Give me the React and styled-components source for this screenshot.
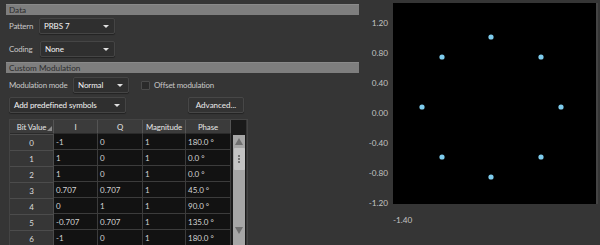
import React from 'react';
import styled, { createGlobalStyle } from 'styled-components';

// Estilos globales de la página
const GlobalStyle = createGlobalStyle`
  body {
    margin: 0;
    background: #353535;
    font-family: Lato, "Noto Sans", sans-serif;
  }
`;

const Page = styled.div`
  width: 600px;
  height: 245px;
  overflow: hidden;
  display: flex;
  background: #353535;
`;

const LeftPane = styled.div`
  width: 353px;
  margin-left: 6px;
  padding-top: 4px;
  display: flex;
  flex-direction: column;
`;

const SectionHeader = styled.div`
  height: 10px;
  line-height: 10px;
  background: #7e7e7e;
  border-top: 1px solid #8a8a8a;
  color: #2c2c2c;
  font-size: 8.2px;
  padding-left: 3px;
  margin-top: ${(p) => p.top || 0}px;
`;

const FormRow = styled.div`
  display: flex;
  align-items: center;
  margin-top: ${(p) => p.top || 0}px;
  padding-left: 3px;
`;

const Label = styled.span`
  flex-shrink: 0;
  white-space: nowrap;
  width: ${(p) => (p.w ? p.w + 'px' : 'auto')};
  margin-left: ${(p) => p.ml || 0}px;
  color: #c8c8c8;
  font-size: 7.9px;
  letter-spacing: -0.2px;
`;

const Select = styled.div`
  flex-shrink: 0;
  white-space: nowrap;
  width: ${(p) => p.w}px;
  height: 16px;
  box-sizing: border-box;
  display: flex;
  align-items: center;
  justify-content: space-between;
  padding: 0 5px 0 4px;
  background: #2f2f2f;
  border: 1px solid #454545;
  border-radius: 2px;
  color: #f4f4f4;
  font-size: 8px;
  letter-spacing: -0.1px;
  box-shadow: 0 1px 1px rgba(0, 0, 0, 0.35);
`;

const Caret = styled.span`
  width: 0;
  height: 0;
  border-left: 3px solid transparent;
  border-right: 3px solid transparent;
  border-top: 3px solid #e0e0e0;
`;

const CheckBox = styled.span`
  flex-shrink: 0;
  width: 7px;
  height: 7px;
  margin-left: 12px;
  border: 1px solid #4a4a4a;
  background: #2a2a2a;
  border-radius: 1px;
`;

const Button = styled.div`
  margin-left: 62px;
  width: 56px;
  height: 16px;
  box-sizing: border-box;
  display: flex;
  align-items: center;
  justify-content: center;
  background: #333;
  border: 1px solid #474747;
  border-radius: 2px;
  color: #ececec;
  font-size: 8px;
  box-shadow: 0 1px 1px rgba(0, 0, 0, 0.35);
`;

const TableFrame = styled.div`
  margin: 6px 0 0 3px;
  width: 237px;
  display: flex;
  border: 1px solid #444;
  border-bottom: none;
`;

const Grid = styled.div`
  display: grid;
  grid-template-columns: 44px 44px 45px 43px 45px;
  grid-auto-rows: 16px;
  grid-template-rows: 14px;
`;

const HeadCell = styled.div`
  position: relative;
  display: flex;
  align-items: center;
  justify-content: center;
  background: #3b3b3b;
  border-right: 1px solid #545454;
  border-bottom: 1px solid #2a2a2a;
  color: #e6e6e6;
  font-size: 7.8px;
  letter-spacing: -0.1px;
`;

const SortMark = styled.span`
  position: absolute;
  right: 1px;
  bottom: 2px;
  width: 0;
  height: 0;
  border-left: 5px solid transparent;
  border-bottom: 5px solid #8a8a8a;
`;

const RowHead = styled.div`
  display: flex;
  align-items: center;
  justify-content: center;
  background: #363636;
  border-top: 1px solid #4c4c4c;
  border-right: 1px solid #4c4c4c;
  color: #dcdcdc;
  font-size: 8px;
`;

const Cell = styled.div`
  display: flex;
  align-items: center;
  padding-left: 2px;
  background: #121212;
  border-right: 1px solid #3c3c3c;
  border-bottom: 1px solid #3c3c3c;
  color: #d4d4d4;
  font-size: 8px;
`;

const ScrollCol = styled.div`
  width: 15px;
  display: flex;
  flex-direction: column;
  background: #1a1a1a;
`;

const ScrollTrack = styled.div`
  margin: 1px 1px 0 2px;
  flex: 1;
  background: #a6a6a6;
  display: flex;
  flex-direction: column;
  align-items: center;
  padding-top: 3px;
`;

const Arrow = styled.span`
  width: 0;
  height: 0;
  border-left: 4px solid transparent;
  border-right: 4px solid transparent;
  ${(p) => (p.down ? 'border-top' : 'border-bottom')}: 7px solid #6f6f6f;
  margin-top: ${(p) => p.mt || 0}px;
`;

const Thumb = styled.div`
  margin-top: 3px;
  width: 11px;
  height: 22px;
  background: #c4c4c4;
  border-radius: 1px;
  display: flex;
  flex-direction: column;
  align-items: center;
  justify-content: center;
  gap: 1px;
`;

const Dot = styled.span`
  width: 2px;
  height: 2px;
  border-radius: 50%;
  background: #5a5a5a;
`;

const RightPane = styled.div`
  display: flex;
  margin-left: 2px;
  padding-top: 3px;
`;

const AxisY = styled.div`
  width: 27px;
  padding-top: 11px;
  display: flex;
  flex-direction: column;
  align-items: flex-end;
`;

const Tick = styled.div`
  height: 30px;
  line-height: 30px;
  margin-top: -6px;
  margin-bottom: 6px;
  color: #c4c4c4;
  font-size: 8.2px;
`;

const PlotColumn = styled.div`
  margin-left: 5px;
  display: flex;
  flex-direction: column;
`;

const Plot = styled.svg`
  display: block;
  background: #000;
  border-right: 2px solid #444;
`;

const XLabel = styled.div`
  margin-top: 11px;
  color: #c4c4c4;
  font-size: 8.2px;
`;

const rows = [
  ['0', '-1', '0', '1', '180.0 °'],
  ['1', '1', '0', '1', '0.0 °'],
  ['2', '1', '0', '1', '0.0 °'],
  ['3', '0.707', '0.707', '1', '45.0 °'],
  ['4', '0', '1', '1', '90.0 °'],
  ['5', '-0.707', '0.707', '1', '135.0 °'],
  ['6', '-1', '0', '1', '180.0 °'],
];

const points = [
  [97, 34], [48, 54], [147, 54], [28, 104],
  [167, 104], [48, 154], [147, 154], [97, 174],
];

const ticks = ['1.20', '0.80', '0.40', '0.00', '-0.40', '-0.80', '-1.20'];

const App = () => {
  return (
    <Page>
      <GlobalStyle />
      <LeftPane>
        <SectionHeader>Data</SectionHeader>
        <FormRow top={3}>
          <Label w={30}>Pattern</Label>
          <Select w={76}>PRBS 7<Caret /></Select>
        </FormRow>
        <FormRow top={7}>
          <Label w={31}>Coding</Label>
          <Select w={75}>None<Caret /></Select>
        </FormRow>
        <SectionHeader top={5}>Custom Modulation</SectionHeader>
        <FormRow top={4}>
          <Label w={64}>Modulation mode</Label>
          <Select w={56}>Normal<Caret /></Select>
          <CheckBox />
          <Label ml={4}>Offset modulation</Label>
        </FormRow>
        <FormRow top={4}>
          <Select w={117}>Add predefined symbols<Caret /></Select>
          <Button>Advanced...</Button>
        </FormRow>
        <TableFrame>
          <Grid>
            <HeadCell>Bit Value<SortMark /></HeadCell>
            <HeadCell>I</HeadCell>
            <HeadCell>Q</HeadCell>
            <HeadCell>Magnitude</HeadCell>
            <HeadCell>Phase</HeadCell>
            {rows.map((r) => (
              <React.Fragment key={r[0]}>
                <RowHead>{r[0]}</RowHead>
                {r.slice(1).map((v, i) => (
                  <Cell key={i}>{v}</Cell>
                ))}
              </React.Fragment>
            ))}
          </Grid>
          <ScrollCol>
            <div style={{ height: 14 }} />
            <ScrollTrack>
              <Arrow />
              <Thumb>
                <Dot />
                <Dot />
                <Dot />
              </Thumb>
              <Arrow down mt={57} />
            </ScrollTrack>
          </ScrollCol>
        </TableFrame>
      </LeftPane>
      <RightPane>
        <AxisY>
          {ticks.map((t) => (
            <Tick key={t}>{t}</Tick>
          ))}
        </AxisY>
        <PlotColumn>
          <Plot width="203" height="201" viewBox="0 0 201 201">
            {points.map(([x, y], i) => (
              <circle key={i} cx={x} cy={y} r="2.6" fill="#7fcdee" />
            ))}
          </Plot>
          <XLabel>-1.40</XLabel>
        </PlotColumn>
      </RightPane>
    </Page>
  );
};

export default App;
